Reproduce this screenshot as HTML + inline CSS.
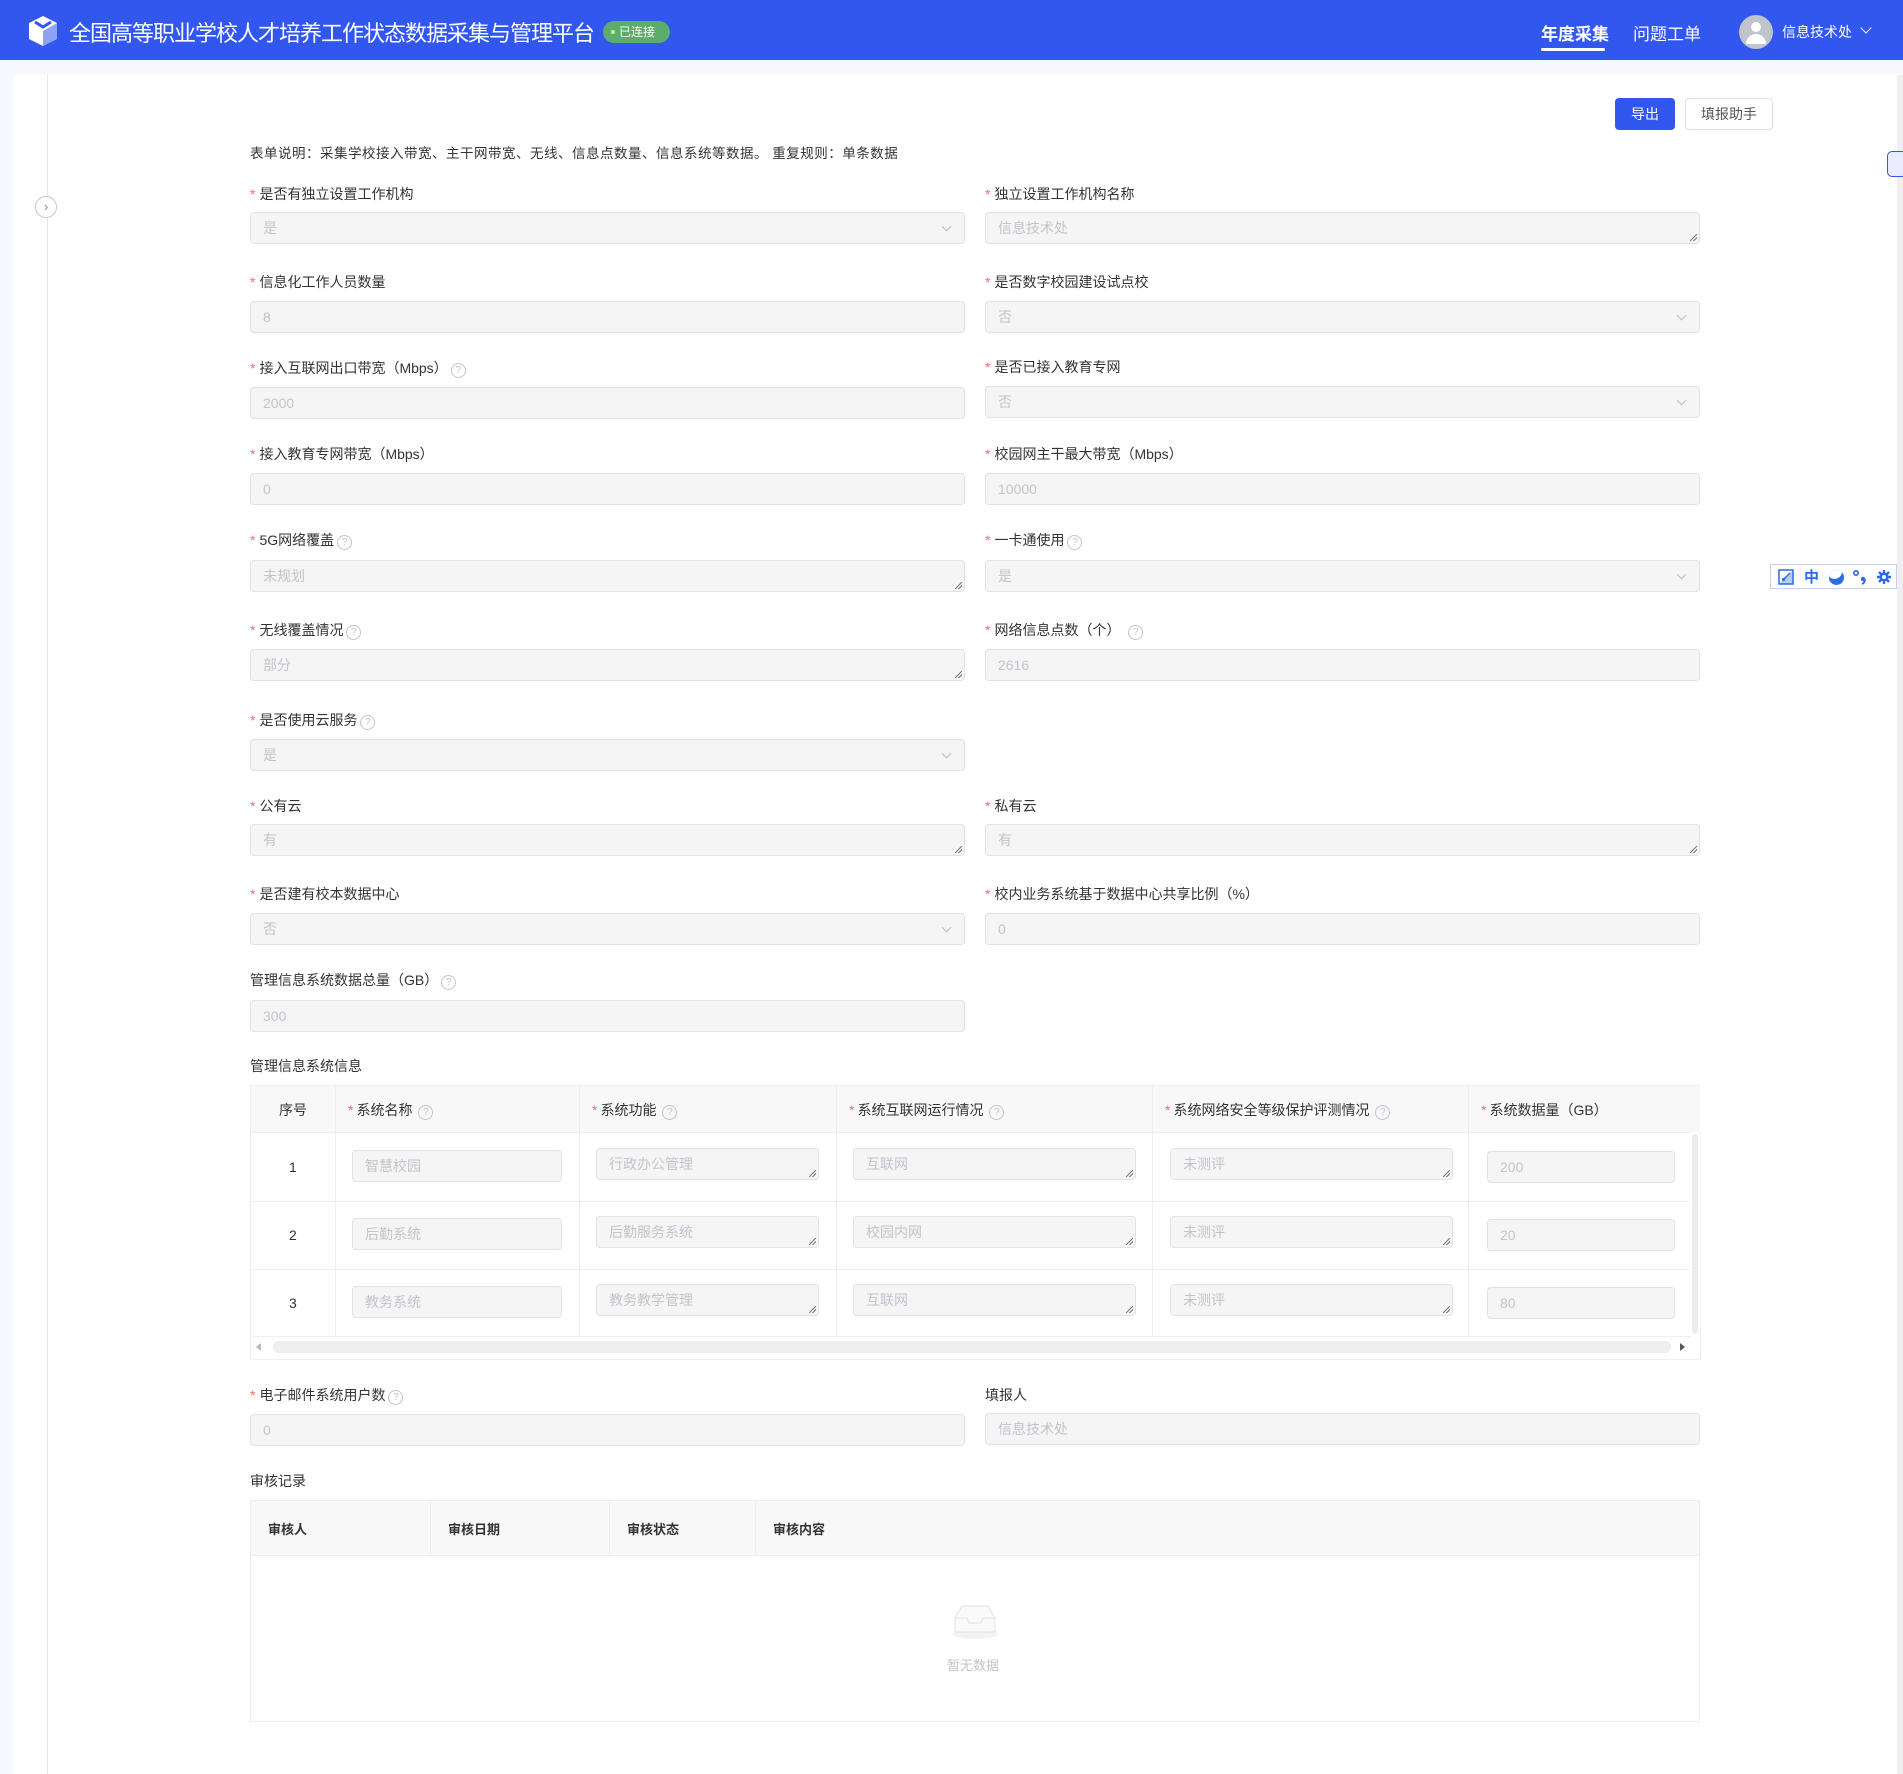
<!DOCTYPE html>
<html><head><meta charset="utf-8"><style>
*{box-sizing:border-box;margin:0;padding:0}
body{width:1903px;height:1774px;background:#f7f9ff;font-family:"Liberation Sans","Noto Sans CJK SC",sans-serif;position:relative;overflow:hidden;color:#333}
.hd{position:absolute;left:0;top:0;width:1903px;height:60px;background:#3157ef}
.card{position:absolute;left:14px;top:75px;width:1883px;height:1699px;background:#fff}
.a{position:absolute}
.lbl{position:absolute;font-size:14px;color:#333;white-space:nowrap;line-height:16px}
.lbl i{font-style:normal;color:#f56c6c;margin-right:4px}
.q{display:inline-block;width:15px;height:15px;border:1px solid #c0c4cc;border-radius:50%;color:#c0c4cc;font-size:10px;line-height:13px;text-align:center;vertical-align:0px;margin-left:3px}
.in{position:absolute;height:32px;width:715px;background:#f5f5f5;border:1px solid #e0e2e8;border-radius:4px;color:#c0c4cc;font-size:14px;padding-left:12px;line-height:30px;white-space:nowrap;overflow:hidden}
.sel::after{content:"";position:absolute;right:14px;top:10px;width:6px;height:6px;border-right:1px solid #b8bcc4;border-bottom:1px solid #b8bcc4;transform:rotate(45deg)}
.ta::after{content:"";position:absolute;right:2px;bottom:2px;width:7px;height:7px;background:linear-gradient(135deg,transparent 45%,#777 46%,#777 54%,transparent 55%,transparent 70%,#777 71%,#777 79%,transparent 80%)}
.th{position:absolute;font-size:14px;color:#333;white-space:nowrap}
.th i{font-style:normal;color:#f56c6c;margin-right:3px}
.vl{position:absolute;width:1px;background:#ebeef5}
.hl{position:absolute;height:1px;background:#ebeef5}
</style></head><body>
<div class="hd">
 <svg class="a" style="left:26px;top:14px" width="34" height="34" viewBox="0 0 34 34"><path d="M17 2 L31 9 L31 25 L17 32 L3 25 L3 9 Z" fill="#fff"/><path d="M17 17 L31 9 L31 25 L17 32 Z" fill="#3157ef" opacity=".55"/><path d="M9 8 L17 13 L25 8" stroke="#3157ef" stroke-width="3" fill="none"/></svg>
 <div class="a" style="left:69px;top:16px;color:#fff;font-size:22px;letter-spacing:-1px;white-space:nowrap">全国高等职业学校人才培养工作状态数据采集与管理平台</div>
 <div class="a" style="left:603px;top:21px;width:67px;height:22px;background:#5cad6c;border-radius:11px;color:#fff;font-size:12px;line-height:22px;padding-left:16px">已连接<span class="a" style="left:8px;top:9px;width:4px;height:4px;border-radius:50%;background:#b6f5a0"></span></div>
 <div class="a" style="left:1541px;top:20px;color:#fff;font-size:17px;font-weight:bold">年度采集</div>
 <div class="a" style="left:1541px;top:48px;width:64px;height:3px;background:#fff;border-radius:2px"></div>
 <div class="a" style="left:1633px;top:20px;color:#fff;font-size:17px">问题工单</div>
 <div class="a" style="left:1739px;top:15px;width:34px;height:34px;border-radius:50%;background:#c0c4cc;overflow:hidden"><div class="a" style="left:12px;top:7px;width:10px;height:10px;border-radius:50%;background:#fff"></div><div class="a" style="left:7px;top:19px;width:20px;height:10px;border-radius:10px 10px 0 0;background:#fff"></div></div>
 <div class="a" style="left:1782px;top:22px;color:#fff;font-size:14px">信息技术处</div>
 <div class="a" style="left:1862px;top:24px;width:8px;height:8px;border-right:1.5px solid #fff;border-bottom:1.5px solid #fff;transform:rotate(45deg)"></div>
</div>
<div class="card"></div>
<div class="a" style="left:47px;top:75px;width:1px;height:1699px;background:#e4e7ed"></div>
<div class="a" style="left:35px;top:196px;width:22px;height:22px;border:1px solid #c0c4cc;border-radius:50%;background:#fff;color:#888;font-size:13px;text-align:center;line-height:19px">›</div>
<div class="a" style="left:1897px;top:75px;width:6px;height:1699px;background:#efefef"></div>
<div class="a" style="left:1887px;top:151px;width:20px;height:26px;border:1px solid #3157ef;border-radius:5px;background:#e8eeff"></div>

<div class="a" style="left:1615px;top:98px;width:60px;height:32px;background:#3157ef;border-radius:4px;color:#fff;font-size:14px;text-align:center;line-height:32px">导出</div>
<div class="a" style="left:1685px;top:98px;width:88px;height:32px;border:1px solid #dcdfe6;border-radius:4px;color:#555;font-size:14px;text-align:center;line-height:30px">填报助手</div>

<div class="lbl" style="left:250px;top:146px;font-size:13.5px;letter-spacing:0.5px">表单说明：采集学校接入带宽、主干网带宽、无线、信息点数量、信息系统等数据。 重复规则：单条数据</div>

<div class="lbl" style="left:250px;top:186px"><i>*</i>是否有独立设置工作机构</div>
<div class="in sel" style="left:250px;top:212px">是</div>
<div class="lbl" style="left:985px;top:186px"><i>*</i>独立设置工作机构名称</div>
<div class="in ta" style="left:985px;top:212px">信息技术处</div>

<div class="lbl" style="left:250px;top:274px"><i>*</i>信息化工作人员数量</div>
<div class="in" style="left:250px;top:301px">8</div>
<div class="lbl" style="left:985px;top:274px"><i>*</i>是否数字校园建设试点校</div>
<div class="in sel" style="left:985px;top:301px">否</div>

<div class="lbl" style="left:250px;top:360px"><i>*</i>接入互联网出口带宽（Mbps）<span class="q">?</span></div>
<div class="in" style="left:250px;top:387px">2000</div>
<div class="lbl" style="left:985px;top:359px"><i>*</i>是否已接入教育专网</div>
<div class="in sel" style="left:985px;top:386px">否</div>

<div class="lbl" style="left:250px;top:446px"><i>*</i>接入教育专网带宽（Mbps）</div>
<div class="in" style="left:250px;top:473px">0</div>
<div class="lbl" style="left:985px;top:446px"><i>*</i>校园网主干最大带宽（Mbps）</div>
<div class="in" style="left:985px;top:473px">10000</div>

<div class="lbl" style="left:250px;top:532px"><i>*</i>5G网络覆盖<span class="q">?</span></div>
<div class="in ta" style="left:250px;top:560px">未规划</div>
<div class="lbl" style="left:985px;top:532px"><i>*</i>一卡通使用<span class="q">?</span></div>
<div class="in sel" style="left:985px;top:560px">是</div>

<div class="lbl" style="left:250px;top:622px"><i>*</i>无线覆盖情况<span class="q">?</span></div>
<div class="in ta" style="left:250px;top:649px">部分</div>
<div class="lbl" style="left:985px;top:622px"><i>*</i>网络信息点数（个）<span class="q" style="margin-left:8px">?</span></div>
<div class="in" style="left:985px;top:649px">2616</div>

<div class="lbl" style="left:250px;top:712px"><i>*</i>是否使用云服务<span class="q">?</span></div>
<div class="in sel" style="left:250px;top:739px">是</div>

<div class="lbl" style="left:250px;top:798px"><i>*</i>公有云</div>
<div class="in ta" style="left:250px;top:824px">有</div>
<div class="lbl" style="left:985px;top:798px"><i>*</i>私有云</div>
<div class="in ta" style="left:985px;top:824px">有</div>

<div class="lbl" style="left:250px;top:886px"><i>*</i>是否建有校本数据中心</div>
<div class="in sel" style="left:250px;top:913px">否</div>
<div class="lbl" style="left:985px;top:886px"><i>*</i>校内业务系统基于数据中心共享比例（%）</div>
<div class="in" style="left:985px;top:913px">0</div>

<div class="lbl" style="left:250px;top:972px">管理信息系统数据总量（GB）<span class="q">?</span></div>
<div class="in" style="left:250px;top:1000px">300</div>

<div class="lbl" style="left:250px;top:1058px">管理信息系统信息</div>

<div class="a" style="left:250px;top:1085px;width:1450px;height:47px;background:#f8f8f9;border-top:1px solid #ebeef5"></div>
<div class="hl" style="left:250px;top:1132px;width:1440px"></div>
<div class="hl" style="left:250px;top:1201px;width:1440px"></div>
<div class="hl" style="left:250px;top:1269px;width:1440px"></div>
<div class="hl" style="left:250px;top:1336px;width:1440px"></div>
<div class="hl" style="left:250px;top:1359px;width:1450px"></div>
<div class="vl" style="left:250px;top:1085px;height:274px"></div>
<div class="vl" style="left:335px;top:1085px;height:251px"></div>
<div class="vl" style="left:579px;top:1085px;height:251px"></div>
<div class="vl" style="left:836px;top:1085px;height:251px"></div>
<div class="vl" style="left:1152px;top:1085px;height:251px"></div>
<div class="vl" style="left:1468px;top:1085px;height:251px"></div>
<div class="vl" style="left:1700px;top:1132px;height:227px"></div>
<div class="a" style="left:1692px;top:1134px;width:6px;height:200px;background:#ececec;border-radius:3px"></div>
<div class="a" style="left:273px;top:1341px;width:1398px;height:12px;background:#efefef;border-radius:6px"></div>
<div class="a" style="left:1680px;top:1343px;width:0;height:0;border-left:5px solid #555;border-top:4px solid transparent;border-bottom:4px solid transparent"></div>
<div class="a" style="left:256px;top:1343px;width:0;height:0;border-right:5px solid #bbb;border-top:4px solid transparent;border-bottom:4px solid transparent"></div>
<div class="th" style="left:279px;top:1100px">序号</div>
<div class="th" style="left:348px;top:1100px"><i>*</i>系统名称<span class="q" style="margin-left:6px">?</span></div>
<div class="th" style="left:592px;top:1100px"><i>*</i>系统功能<span class="q" style="margin-left:6px">?</span></div>
<div class="th" style="left:849px;top:1100px"><i>*</i>系统互联网运行情况<span class="q" style="margin-left:6px">?</span></div>
<div class="th" style="left:1165px;top:1100px"><i>*</i>系统网络安全等级保护评测情况<span class="q" style="margin-left:6px">?</span></div>
<div class="th" style="left:1481px;top:1100px"><i>*</i>系统数据量（GB）</div>

<div class="th" style="left:289px;top:1159px">1</div>
<div class="in" style="left:352px;top:1150px;width:210px">智慧校园</div>
<div class="in ta" style="left:596px;top:1148px;width:223px">行政办公管理</div>
<div class="in ta" style="left:853px;top:1148px;width:283px">互联网</div>
<div class="in ta" style="left:1170px;top:1148px;width:283px">未测评</div>
<div class="in" style="left:1487px;top:1151px;width:188px">200</div>

<div class="th" style="left:289px;top:1227px">2</div>
<div class="in" style="left:352px;top:1218px;width:210px">后勤系统</div>
<div class="in ta" style="left:596px;top:1216px;width:223px">后勤服务系统</div>
<div class="in ta" style="left:853px;top:1216px;width:283px">校园内网</div>
<div class="in ta" style="left:1170px;top:1216px;width:283px">未测评</div>
<div class="in" style="left:1487px;top:1219px;width:188px">20</div>

<div class="th" style="left:289px;top:1295px">3</div>
<div class="in" style="left:352px;top:1286px;width:210px">教务系统</div>
<div class="in ta" style="left:596px;top:1284px;width:223px">教务教学管理</div>
<div class="in ta" style="left:853px;top:1284px;width:283px">互联网</div>
<div class="in ta" style="left:1170px;top:1284px;width:283px">未测评</div>
<div class="in" style="left:1487px;top:1287px;width:188px">80</div>

<div class="lbl" style="left:250px;top:1387px"><i>*</i>电子邮件系统用户数<span class="q">?</span></div>
<div class="in" style="left:250px;top:1414px">0</div>
<div class="lbl" style="left:985px;top:1387px">填报人</div>
<div class="in" style="left:985px;top:1413px">信息技术处</div>

<div class="lbl" style="left:250px;top:1473px">审核记录</div>
<div class="a" style="left:250px;top:1500px;width:1450px;height:222px;border:1px solid #ebeef5"></div>
<div class="a" style="left:251px;top:1501px;width:1448px;height:55px;background:#f8f8f9;border-bottom:1px solid #ebeef5"></div>
<div class="vl" style="left:430px;top:1501px;height:55px"></div>
<div class="vl" style="left:609px;top:1501px;height:55px"></div>
<div class="vl" style="left:755px;top:1501px;height:55px"></div>
<div class="th" style="left:268px;top:1519px;font-weight:bold;font-size:13px">审核人</div>
<div class="th" style="left:448px;top:1519px;font-weight:bold;font-size:13px">审核日期</div>
<div class="th" style="left:627px;top:1519px;font-weight:bold;font-size:13px">审核状态</div>
<div class="th" style="left:773px;top:1519px;font-weight:bold;font-size:13px">审核内容</div>
<svg class="a" style="left:950px;top:1602px" width="50" height="38" viewBox="0 0 50 38"><ellipse cx="25" cy="32" rx="23" ry="5" fill="#f3f3f3"/><path d="M5 16 L12 4 L38 4 L45 16 L45 30 L5 30 Z" fill="#fafafa" stroke="#e2e2e2"/><path d="M5 16 L17 16 L19 21 L31 21 L33 16 L45 16" fill="none" stroke="#e2e2e2"/></svg>
<div class="th" style="left:947px;top:1655px;color:#c0c4cc;font-size:13px">暂无数据</div>

<div class="a" style="left:1770px;top:564px;width:127px;height:25px;border:1px solid #c6d0ee;background:#fff"></div>
<svg class="a" style="left:1778px;top:569px" width="16" height="16" viewBox="0 0 16 16"><rect x="1" y="1" width="14" height="14" fill="none" stroke="#2b6ae8" stroke-width="1.5"/><path d="M1 15 L15 1 L15 15Z" fill="#2b6ae8" opacity=".35"/><path d="M5 11 L12 4" stroke="#2b6ae8" stroke-width="1.5"/><circle cx="5.5" cy="10.5" r="1.6" fill="#2b6ae8"/></svg>
<div class="a" style="left:1804px;top:566px;color:#2b6ae8;font-size:15px;font-weight:bold">中</div>
<div class="a" style="left:1829px;top:570px;width:15px;height:15px;border-radius:50%;background:#2b6ae8;overflow:hidden"><div class="a" style="left:-2px;top:-6px;width:15px;height:15px;border-radius:50%;background:#fff"></div></div>
<svg class="a" style="left:1852px;top:569px" width="16" height="16" viewBox="0 0 16 16"><circle cx="4" cy="4" r="2.2" fill="none" stroke="#2b6ae8" stroke-width="1.6"/><circle cx="11" cy="10" r="2.2" fill="#2b6ae8"/><path d="M13 10 Q13 14 10 15" stroke="#2b6ae8" stroke-width="1.8" fill="none"/></svg>
<svg class="a" style="left:1876px;top:569px" width="16" height="16" viewBox="0 0 16 16"><g stroke="#2b6ae8" stroke-width="2.4"><path d="M8 1V15M1 8H15M3 3L13 13M13 3L3 13"/></g><circle cx="8" cy="8" r="4.5" fill="#2b6ae8"/><circle cx="8" cy="8" r="2" fill="#fff"/></svg>
</body></html>
